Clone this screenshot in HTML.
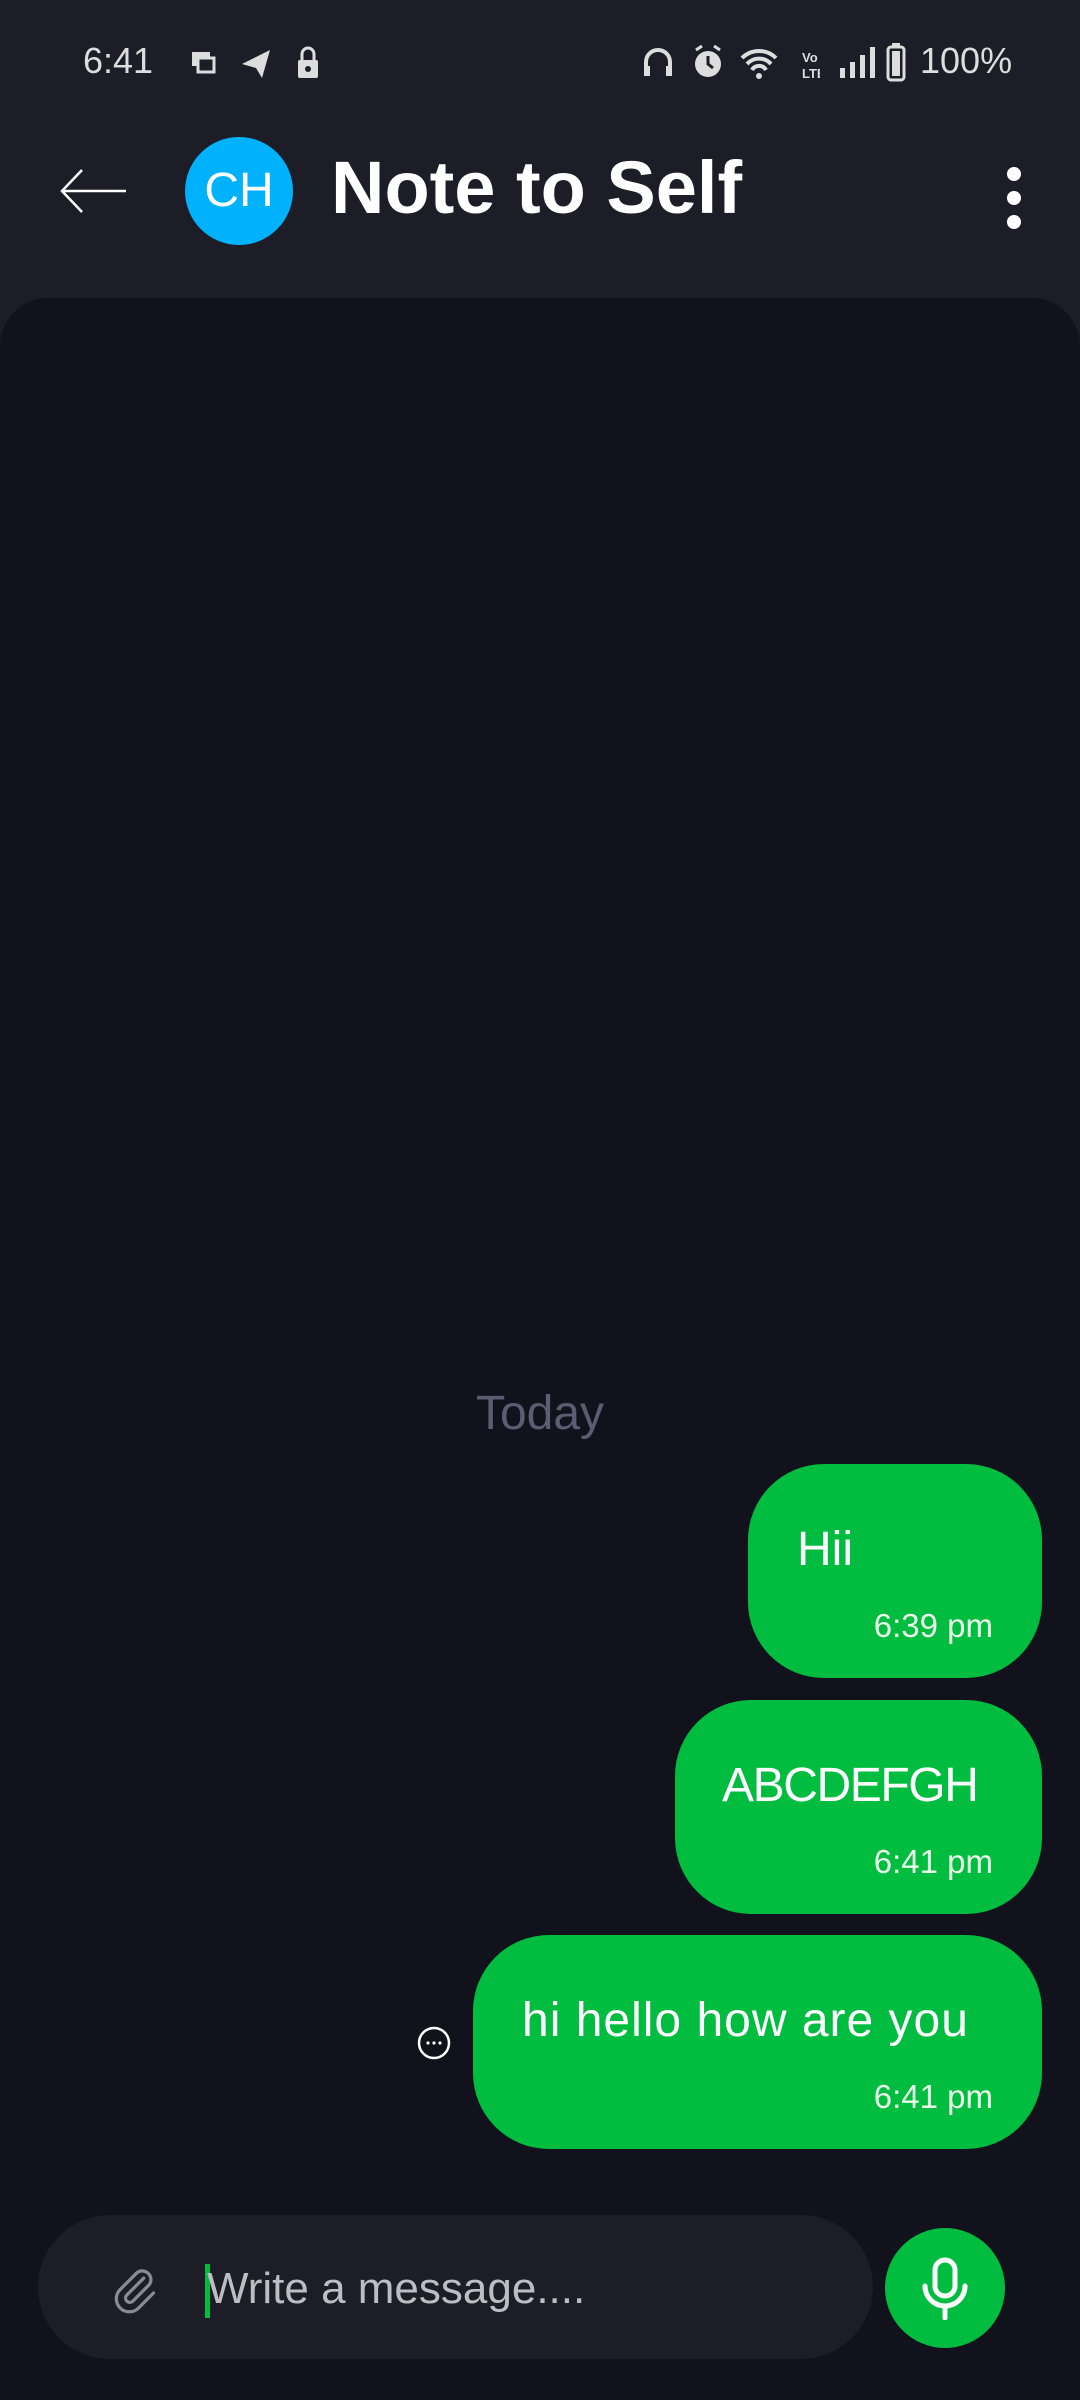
<!DOCTYPE html>
<html><head><meta charset="utf-8"><style>
*{margin:0;padding:0;box-sizing:border-box}
body{width:1080px;height:2400px;background:#1c1d27;font-family:"Liberation Sans",sans-serif;position:relative;overflow:hidden;color:#fff}
.abs{position:absolute}
.panel{left:0;top:298px;width:1080px;height:2102px;background:#11121b;border-radius:48px 48px 0 0}
.bub{position:absolute;right:38px;height:214px;background:#00bd40;border-radius:76px}
.bub .t{position:absolute;font-size:48px;top:58px;white-space:nowrap}
.bub .tm{position:absolute;right:49px;top:143px;font-size:33px;color:#eafbe9}
</style></head><body>
<div class="abs" style="left:83px;top:40px;font-size:36px;color:#ddd">6:41</div>
<svg class="abs" style="left:190px;top:46px" width="140" height="36" viewBox="0 0 140 36">
<rect x="2" y="6" width="18" height="14" fill="#ddd"/><rect x="8" y="12" width="16" height="14" fill="#1c1d27" stroke="#ddd" stroke-width="3"/>
<path d="M52 18 L80 4 L72 32 L66 22 Z" fill="#ddd"/>
<rect x="108" y="14" width="20" height="18" rx="2" fill="#ddd"/><path d="M112 14 V8 a6 6 0 0 1 12 0 V14" stroke="#ddd" stroke-width="3" fill="none"/><circle cx="118" cy="23" r="3" fill="#1c1d27"/>
</svg>
<svg class="abs" style="left:640px;top:42px" width="180" height="40" viewBox="0 0 180 40">
<path d="M6 34 V20 a12 12 0 0 1 24 0 V34" stroke="#ddd" stroke-width="4" fill="none"/><rect x="4" y="24" width="6" height="10" fill="#ddd"/><rect x="26" y="24" width="6" height="10" fill="#ddd"/>
<circle cx="68" cy="22" r="13" fill="#ddd"/><path d="M68 14 V22 L73 26" stroke="#1c1d27" stroke-width="3" fill="none"/><path d="M56 8 L62 4 M80 8 L74 4" stroke="#ddd" stroke-width="3"/>
<path d="M102 16 a24 24 0 0 1 34 0 M107 22 a16 16 0 0 1 24 0 M112 28 a8 8 0 0 1 14 0" stroke="#ddd" stroke-width="4" fill="none"/><circle cx="119" cy="34" r="3" fill="#ddd"/>
<text x="162" y="20" font-size="13" fill="#ddd" font-weight="bold">Vo</text><text x="162" y="36" font-size="13" fill="#ddd" font-weight="bold">LTE</text>
</svg>
<svg class="abs" style="left:838px;top:42px" width="70" height="42" viewBox="0 0 70 42">
<rect x="2" y="26" width="5" height="10" fill="#ddd"/><rect x="12" y="20" width="5" height="16" fill="#ddd"/><rect x="22" y="13" width="5" height="23" fill="#ddd"/><rect x="32" y="5" width="5" height="31" fill="#ddd"/>
<rect x="50" y="5" width="16" height="33" rx="3" stroke="#ddd" stroke-width="3" fill="none"/><rect x="54" y="9" width="8" height="25" fill="#ddd"/><rect x="54" y="1" width="8" height="4" fill="#ddd"/>
</svg>
<div class="abs" style="left:920px;top:40px;font-size:36px;color:#ddd">100%</div>
<svg class="abs" style="left:58px;top:168px" width="72" height="48" viewBox="0 0 72 48"><path d="M68 23 H5 M24 2 L4 23 L24 44" stroke="#fff" stroke-width="2.5" fill="none"/></svg>
<div class="abs" style="left:185px;top:137px;width:108px;height:108px;border-radius:50%;background:#00b1fb;font-size:48px;line-height:108px;text-align:center">CH</div>
<div class="abs" style="left:331px;top:143px;font-size:74px;font-weight:bold;line-height:90px">Note to Self</div>
<div class="abs" style="left:1007px;top:167px;width:14px;height:14px;border-radius:50%;background:#fff;box-shadow:0 24px 0 #fff,0 48px 0 #fff"></div>
<div class="abs panel"></div>
<div class="abs" style="left:0;width:1080px;text-align:center;top:1386px;font-size:48px;color:#5c5c72">Today</div>
<div class="bub" style="top:1464px;width:294px"><div class="t" style="left:49px">Hii</div><div class="tm">6:39 pm</div></div>
<div class="bub" style="top:1700px;width:367px"><div class="t" style="left:47px;letter-spacing:-1.4px">ABCDEFGH</div><div class="tm">6:41 pm</div></div>
<div class="bub" style="top:1935px;width:569px"><div class="t" style="left:49px;letter-spacing:1px">hi hello how are you</div><div class="tm">6:41 pm</div></div>
<svg class="abs" style="left:415px;top:2024px" width="38" height="38" viewBox="0 0 38 38"><circle cx="19" cy="19" r="15" stroke="#fff" stroke-width="2.5" fill="none"/><circle cx="13" cy="19" r="1.6" fill="#fff"/><circle cx="19" cy="19" r="1.6" fill="#fff"/><circle cx="25" cy="19" r="1.6" fill="#fff"/></svg>
<div class="abs" style="left:38px;top:2215px;width:835px;height:144px;border-radius:72px;background:#1c1d27"></div>
<svg class="abs" style="left:108px;top:2264px" width="52" height="52" viewBox="0 0 24 24"><path d="M16.5 6.5 L8.5 14.5 a2 2 0 0 0 2.8 2.8 L19 9.6 a4 4 0 0 0 -5.6 -5.6 L5.6 11.8 a6 6 0 0 0 8.5 8.5 L21 13.4" stroke="#8a8a95" stroke-width="1.5" fill="none" stroke-linecap="round"/></svg>
<div class="abs" style="left:205px;top:2264px;width:5px;height:54px;background:#00bd40"></div>
<div class="abs" style="left:207px;top:2264px;font-size:44px;color:#bdbdc4">Write a message....</div>
<div class="abs" style="left:885px;top:2228px;width:120px;height:120px;border-radius:50%;background:#00bd40"></div>
<svg class="abs" style="left:915px;top:2256px" width="60" height="64" viewBox="0 0 60 64"><rect x="20" y="4" width="20" height="36" rx="10" stroke="#fff" stroke-width="5" fill="none"/><path d="M10 30 a20 20 0 0 0 40 0 M30 50 V62" stroke="#fff" stroke-width="5" fill="none" stroke-linecap="round"/></svg>
</body></html>
